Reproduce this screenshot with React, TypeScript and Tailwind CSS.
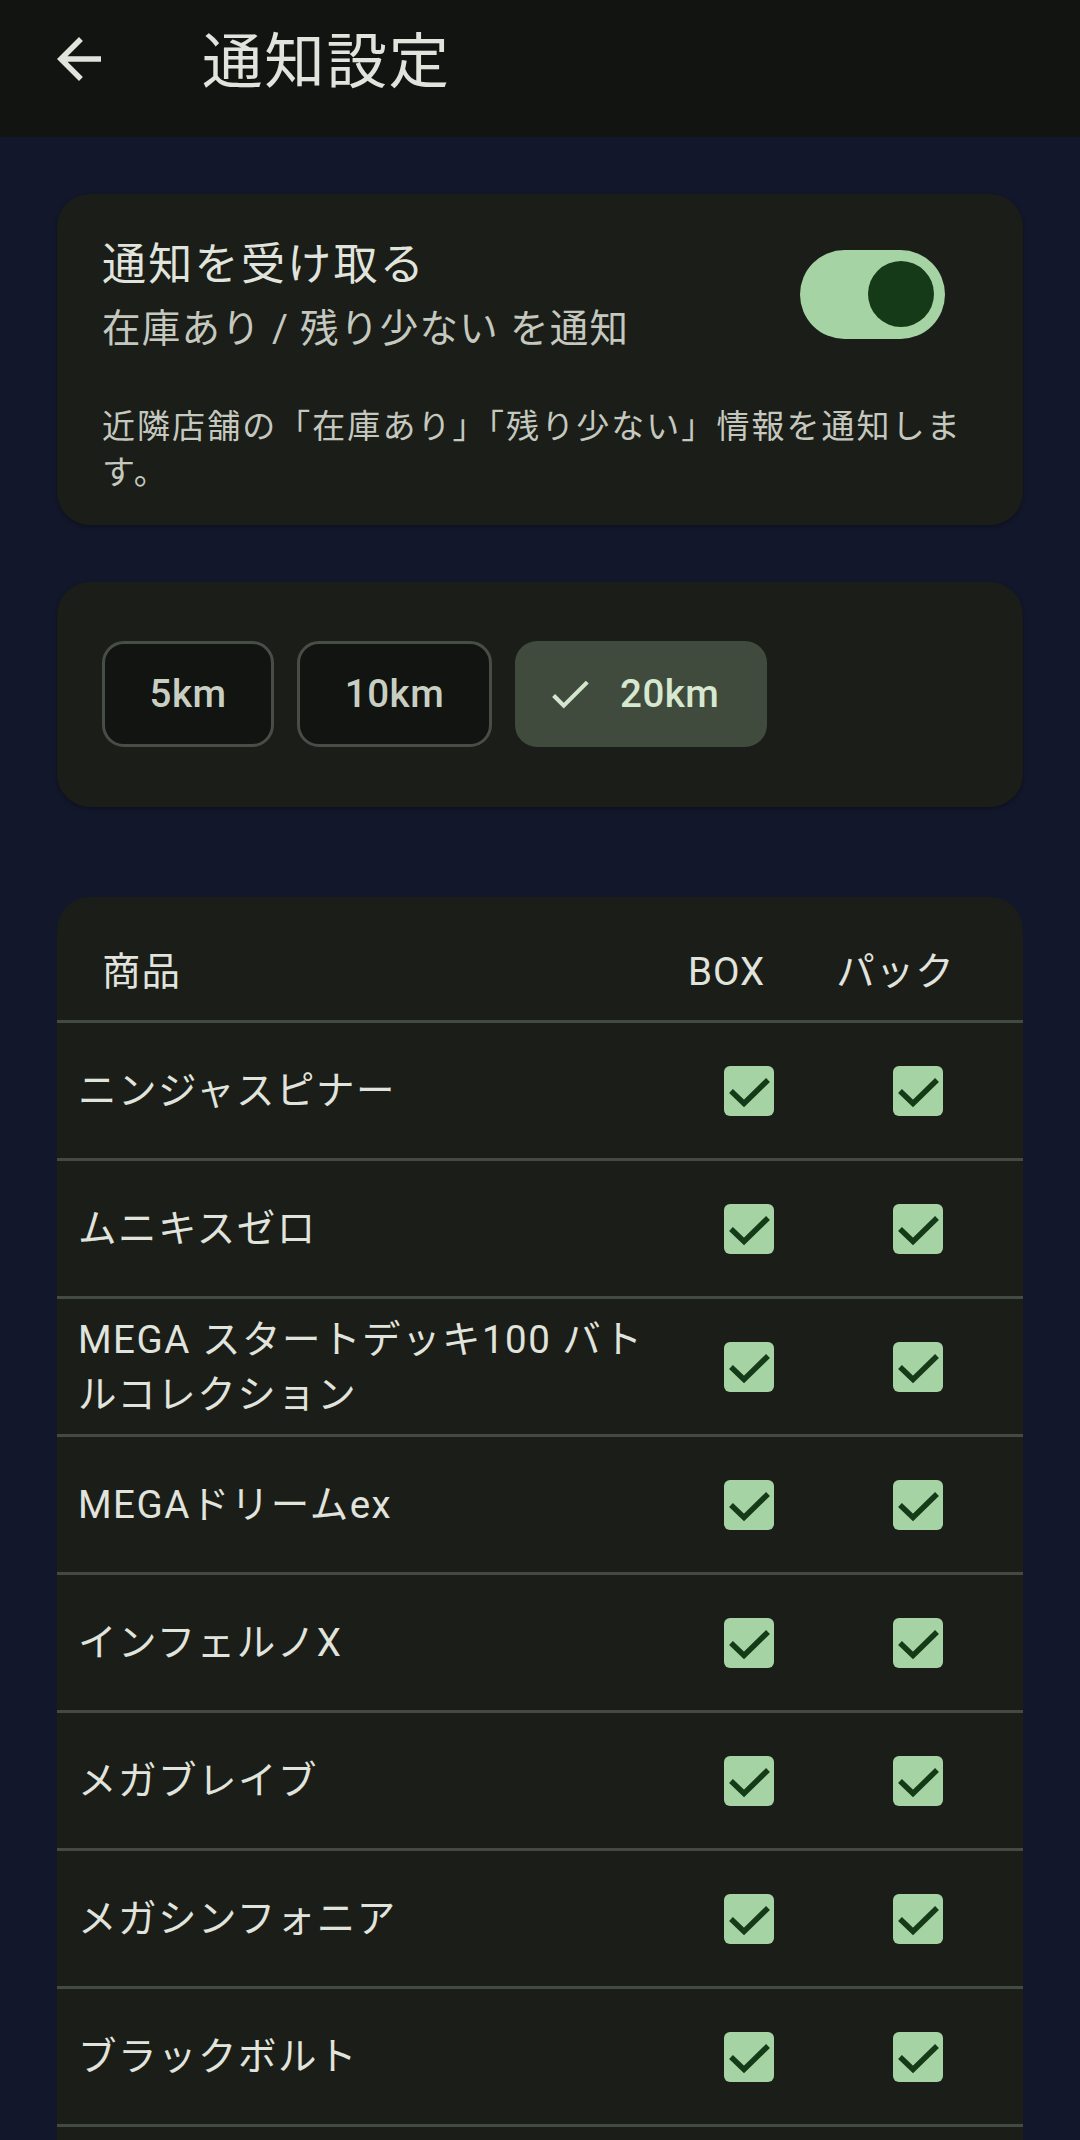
import React, { useState } from 'react';

const PRODUCTS = [
  'ニンジャスピナー',
  'ムニキスゼロ',
  'MEGA スタートデッキ100 バトルコレクション',
  'MEGAドリームex',
  'インフェルノX',
  'メガブレイブ',
  'メガシンフォニア',
  'ブラックボルト',
];

const RANGES = ['5km', '10km', '20km'];
const CHIP_WIDTHS: Record<string, string> = {
  '5km': 'w-[172px]',
  '10km': 'w-[195px]',
  '20km': 'w-[252px]',
};

const CheckBox = ({ checked }: { checked: boolean }) => (
  <div
    className={
      checked
        ? 'w-[50px] h-[50px] rounded-[6px] bg-[#a5d3a3] flex items-center justify-center'
        : 'w-[50px] h-[50px] rounded-[6px] border-[5px] border-[#8c9388]'
    }
  >
    {checked && (
      <svg width="50" height="50" viewBox="0 0 50 50">
        <polyline points="7,25 20,37.5 44,14" fill="none" stroke="#143a17" strokeWidth="5.5" />
      </svg>
    )}
  </div>
);

const App: React.FC = () => {
  const [enabled, setEnabled] = useState(true);
  const [range, setRange] = useState('20km');

  return (
    <div className="min-h-[2140px] w-full bg-[#12172b] font-[Roboto,'Noto_Sans_CJK_JP',sans-serif] text-[#e1e4dc]">
      {/* Top bar */}
      <div className="h-[137px] bg-[#111410] flex items-start">
        <button className="ml-[46px] mt-[26px] w-[66px] h-[66px] flex items-center justify-center">
          <svg width="66" height="66" viewBox="0 0 24 24" fill="#e1e4dc">
            <path d="M20 11H7.83l5.59-5.59L12 4l-8 8 8 8 1.41-1.41L7.83 13H20v-2z" />
          </svg>
        </button>
        <h1 className="ml-[90px] mt-[23px] text-[60.5px] leading-[80px] tracking-[1.7px] font-normal">通知設定</h1>
      </div>

      <div className="px-[57px] pt-[57px] flex flex-col">
        {/* Notification toggle card */}
        <div className="rounded-[33px] bg-[#1a1d18] shadow-[0_2px_4px_rgba(0,0,0,0.3)] pl-[45px] pr-[40px] pt-[38px] pb-[29px]">
          <div className="flex items-center">
            <div className="flex-1">
              <div className="text-[44px] leading-[66px] tracking-[2.3px]">通知を受け取る</div>
              <div className="mt-[3px] text-[38.5px] leading-[55px] tracking-[1.3px] text-[#c4c8bf]">
                在庫あり / 残り少ない を通知
              </div>
            </div>
            <button
              onClick={() => setEnabled(!enabled)}
              className={
                enabled
                  ? 'mr-[38px] w-[145px] h-[89px] rounded-full bg-[#a5d3a3] flex items-center justify-end pr-[11px]'
                  : 'mr-[38px] w-[145px] h-[89px] rounded-full bg-[#30362e] border-[5px] border-[#8c9388] flex items-center justify-start pl-[14px]'
              }
            >
              <span
                className={
                  enabled
                    ? 'block w-[66px] h-[66px] rounded-full bg-[#153a18]'
                    : 'block w-[44px] h-[44px] rounded-full bg-[#8c9388]'
                }
              />
            </button>
          </div>
          <p className="mt-[48px] text-[33px] leading-[46px] tracking-[2.05px] text-[#c4c8bf]">
            近隣店舗の「在庫あり」「残り少ない」情報を通知します。
          </p>
        </div>

        {/* Range chips */}
        <div className="mt-[57px] rounded-[33px] bg-[#1a1d18] shadow-[0_2px_4px_rgba(0,0,0,0.3)] pl-[45px] pt-[59px] pb-[60px] flex gap-[23px]">
          {RANGES.map((r) =>
            r === range ? (
              <button
                key={r}
                onClick={() => setRange(r)}
                className={`${CHIP_WIDTHS[r]} h-[106px] rounded-[22px] bg-[#404b3e] flex items-center pl-[30px] gap-[25px]`}
              >
                <svg width="50" height="50" viewBox="0 0 24 24" fill="#d3e5cc">
                  <path d="M9 16.17L4.83 12l-1.42 1.41L9 19 21 7l-1.41-1.41z" />
                </svg>
                <span className="text-[38.5px] font-medium tracking-[0.5px] text-[#d6e8cf]">{r}</span>
              </button>
            ) : (
              <button
                key={r}
                onClick={() => setRange(r)}
                className={`${CHIP_WIDTHS[r]} h-[106px] rounded-[22px] bg-[#111410] border-[3px] border-[#474e45] flex items-center justify-center`}
              >
                <span className="text-[38.5px] font-medium tracking-[0.5px] text-[#c8cfc2]">{r}</span>
              </button>
            )
          )}
        </div>

        {/* Product table */}
        <div className="mt-[90px] rounded-t-[33px] bg-[#1a1d18] pb-[120px]">
          <div className="h-[123px] pt-[27px] pl-[45px] pr-[43px] flex items-center text-[38.5px] tracking-[1px]">
            <div className="flex-1">商品</div>
            <div className="w-[169px] text-center">BOX</div>
            <div className="w-[169px] text-center">パック</div>
          </div>
          {PRODUCTS.map((name) => (
            <div
              key={name}
              className="min-h-[138px] border-t-[3px] border-[#434a42] px-[21px] py-[12px] flex items-center"
            >
              <div className="flex-1 text-[38.5px] leading-[55px] tracking-[1.5px]">{name}</div>
              <div className="w-[169px] flex justify-center">
                <CheckBox checked />
              </div>
              <div className="w-[169px] flex justify-center">
                <CheckBox checked />
              </div>
            </div>
          ))}
          <div className="border-t-[3px] border-[#434a42]" />
        </div>
      </div>
    </div>
  );
};

export default App;
